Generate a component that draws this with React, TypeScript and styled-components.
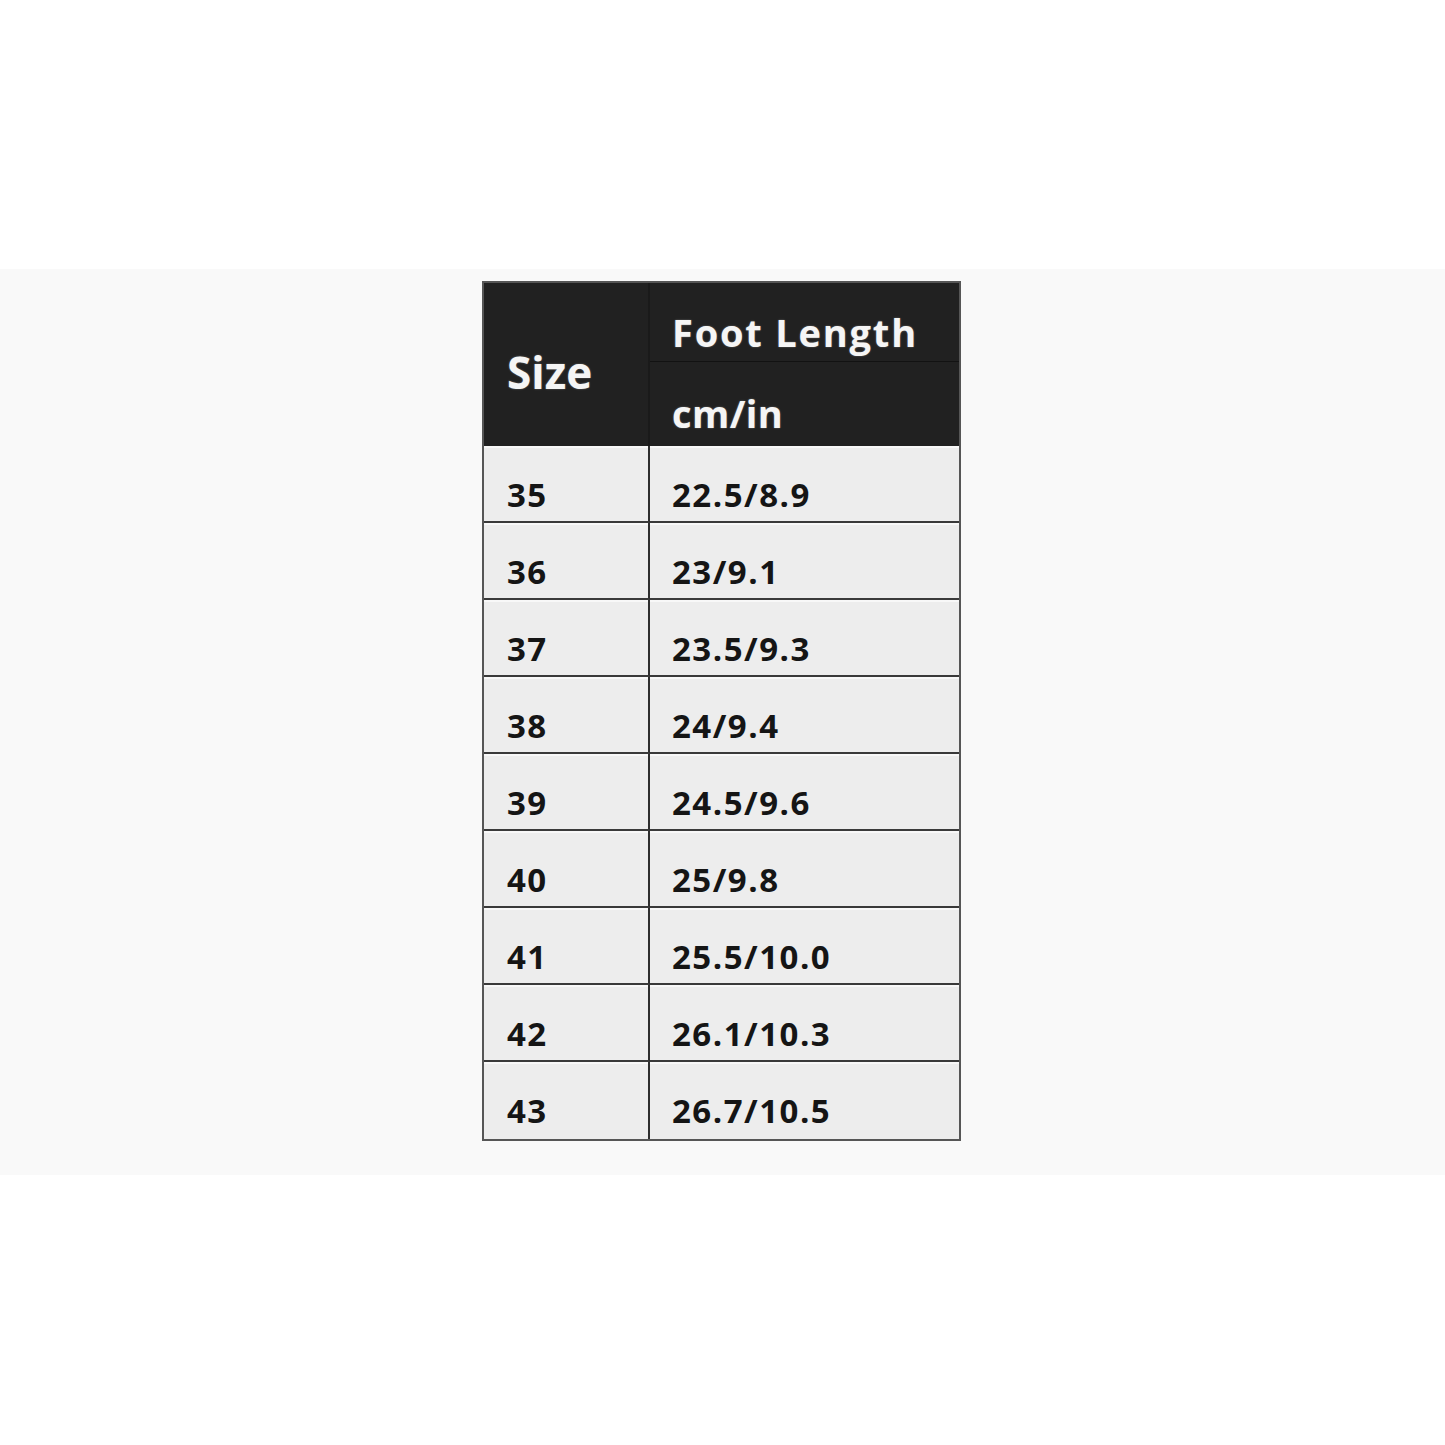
import React from "react";
import styled, { createGlobalStyle } from "styled-components";

const GlobalStyle = createGlobalStyle`
  html, body { margin: 0; padding: 0; background: #ffffff; }
  * { box-sizing: border-box; }
`;

const Page = styled.div`
  width: 1445px;
  height: 1445px;
  padding-top: 269px;
  background: #ffffff;
  font-family: "Open Sans", "Liberation Sans", sans-serif;
`;

const Band = styled.div`
  height: 906px;
  background: #f9f9f9;
  padding: 12px 0 0 482px;
`;

const Chart = styled.div`
  display: grid;
  grid-template-columns: 166px 309px;
  width: 479px;
  border: 2px solid #565656;
  background: #ededed;
`;

const HeadCell = styled.div<{ $first?: boolean; $span?: boolean; $h: number; $pb: number; $divider?: boolean }>`
  display: flex;
  align-items: flex-end;
  height: ${(p) => p.$h}px;
  padding: 0 0 ${(p) => p.$pb}px ${(p) => (p.$first ? 23 : 22)}px;
  background: #212121;
  color: #f5f5f5;
  font-weight: 700;
  line-height: 1;
  white-space: nowrap;
  text-shadow: 0 0 2px rgba(255, 255, 255, 0.35);
  border-right: ${(p) => (p.$first ? "2px solid #1a1a1a" : "none")};
  border-bottom: ${(p) => (p.$divider ? "1px solid #121212" : "none")};
  ${(p) => (p.$span ? "grid-row: span 2;" : "")}
`;

const SizeLabel = styled.span`
  font-size: 44px;
`;

const SubLabel = styled.span<{ $spacing: number }>`
  font-size: 38px;
  letter-spacing: ${(p) => p.$spacing}px;
`;

const Cell = styled.div<{ $first?: boolean; $last?: boolean }>`
  display: flex;
  align-items: flex-end;
  height: 77px;
  padding: 0 0 ${(p) => (p.$last ? 12 : 10)}px ${(p) => (p.$first ? 23 : 22)}px;
  background: #ededed;
  color: #151515;
  font-size: 33px;
  font-weight: 700;
  line-height: 1;
  letter-spacing: 1.5px;
  border-right: ${(p) => (p.$first ? "2px solid #2e2e2e" : "none")};
  border-bottom: ${(p) => (p.$last ? "none" : "2px solid #3a3a3a")};
  box-shadow: inset 0 2px 0 #f8f8f8;
`;

const rows: [string, string][] = [
  ["35", "22.5/8.9"],
  ["36", "23/9.1"],
  ["37", "23.5/9.3"],
  ["38", "24/9.4"],
  ["39", "24.5/9.6"],
  ["40", "25/9.8"],
  ["41", "25.5/10.0"],
  ["42", "26.1/10.3"],
  ["43", "26.7/10.5"],
];

export default function App() {
  return (
    <>
      <GlobalStyle />
      <Page>
        <Band>
          <Chart>
            <HeadCell $first $span $h={163} $pb={52}>
              <SizeLabel>Size</SizeLabel>
            </HeadCell>
            <HeadCell $h={79} $pb={10} $divider>
              <SubLabel $spacing={1.8}>Foot Length</SubLabel>
            </HeadCell>
            <HeadCell $h={84} $pb={14}>
              <SubLabel $spacing={0.4}>cm/in</SubLabel>
            </HeadCell>
            {rows.map(([size, len], i) => (
              <React.Fragment key={size}>
                <Cell $first $last={i === rows.length - 1}>
                  {size}
                </Cell>
                <Cell $last={i === rows.length - 1}>{len}</Cell>
              </React.Fragment>
            ))}
          </Chart>
        </Band>
      </Page>
    </>
  );
}
